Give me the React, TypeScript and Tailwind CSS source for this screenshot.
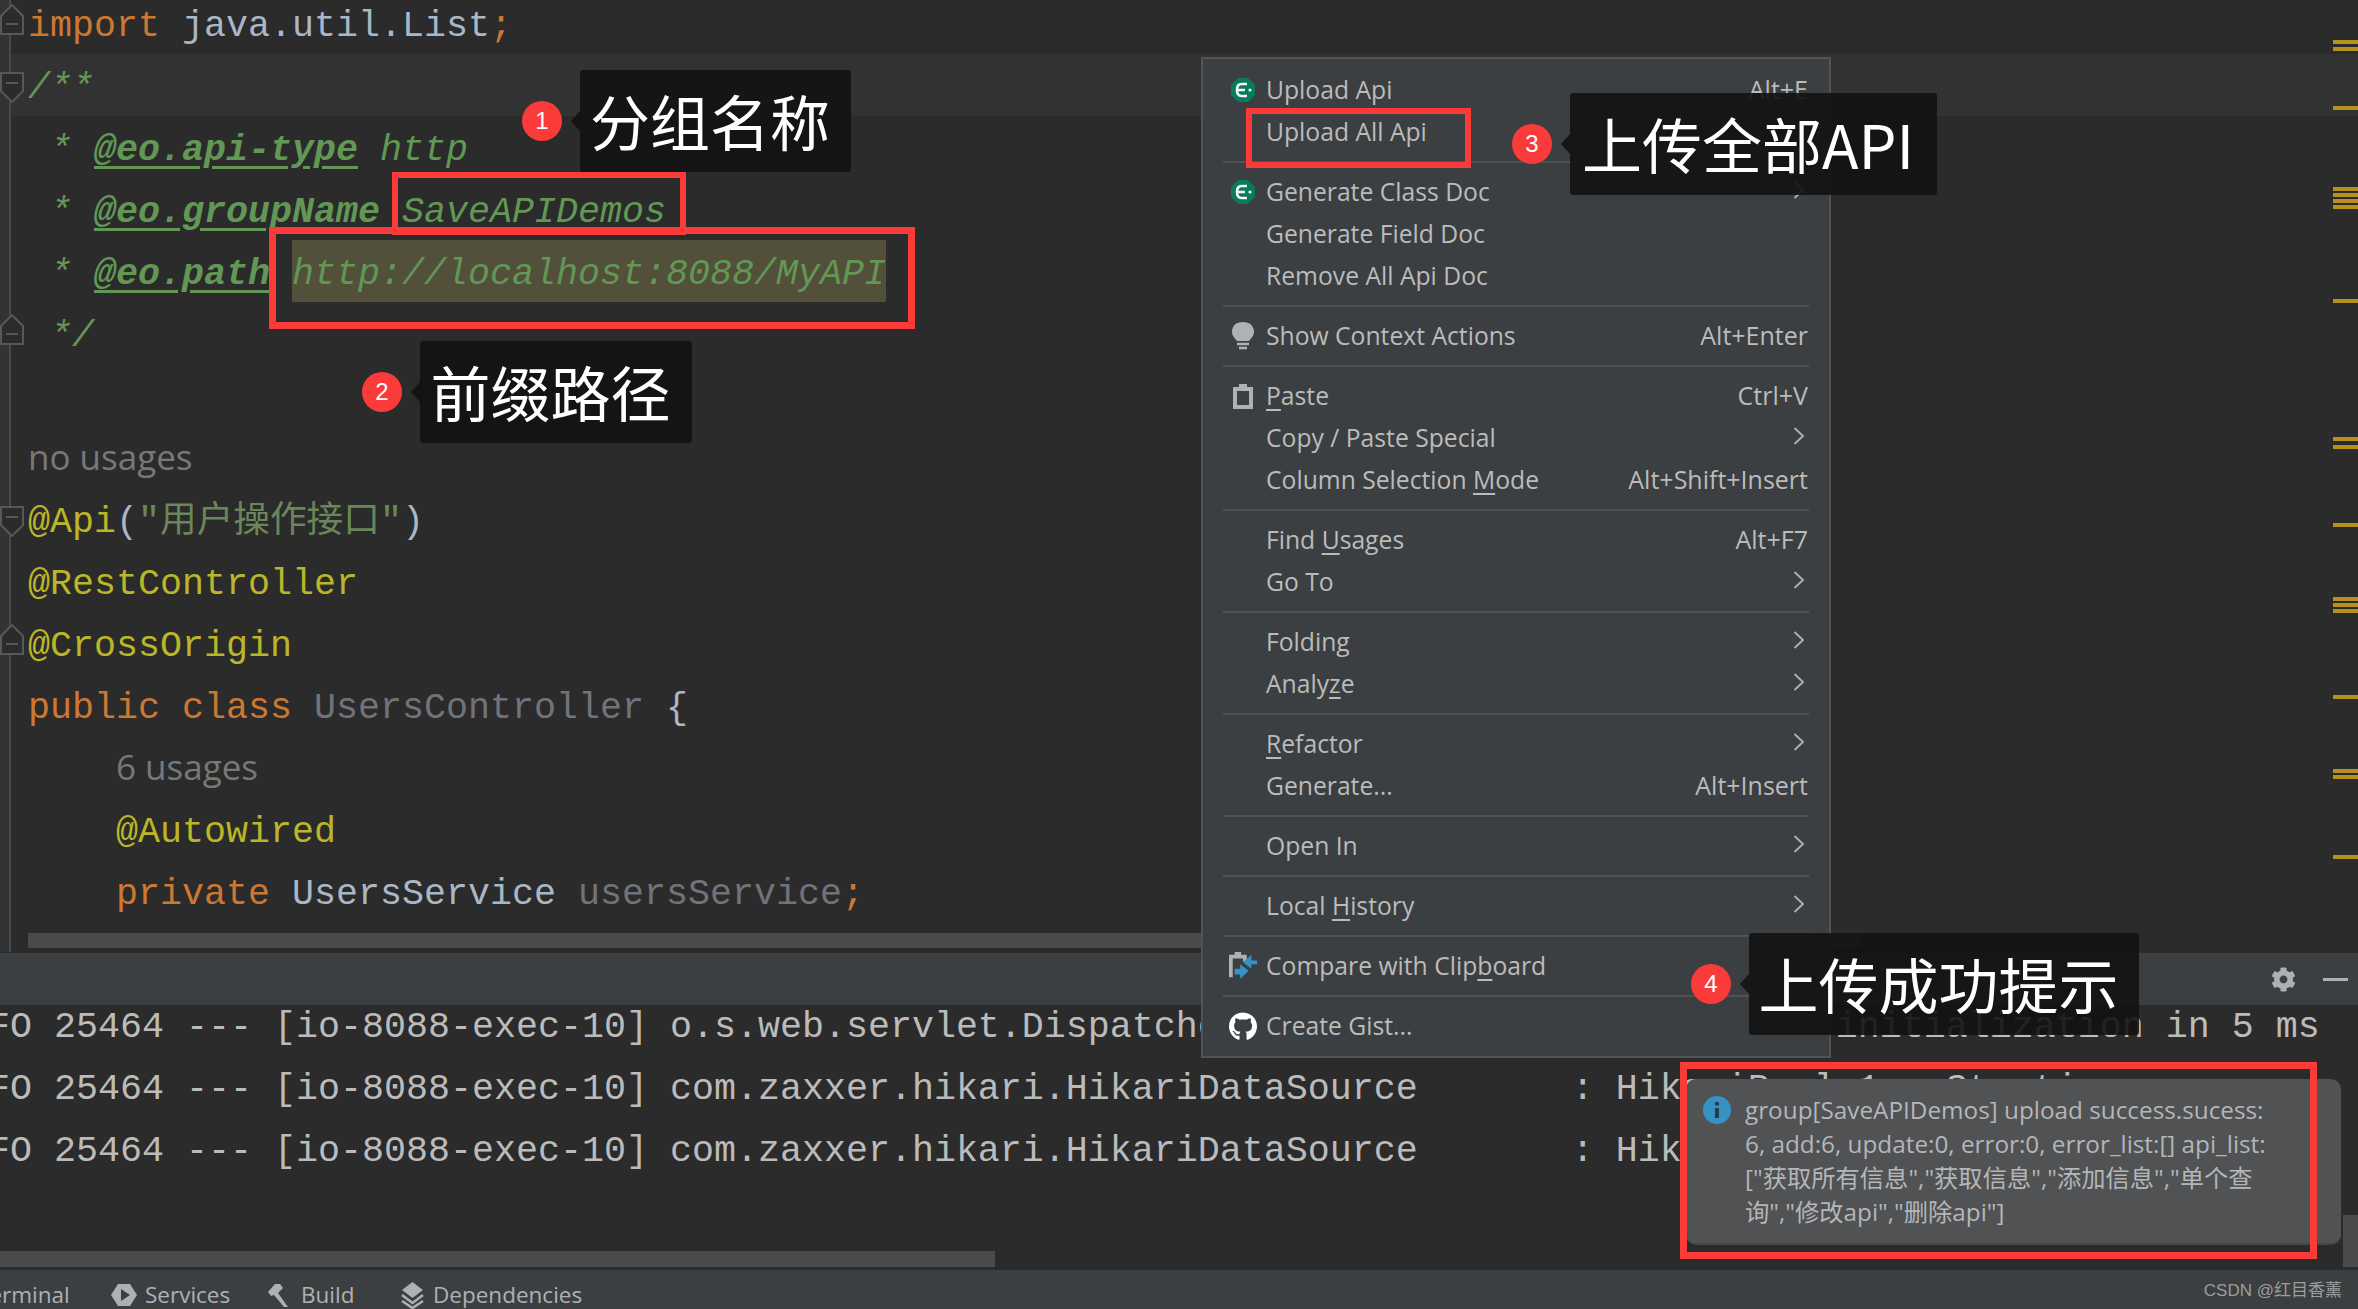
import type { ReactNode } from 'react'
import { FaCog, FaGithub } from 'react-icons/fa'

const MONO = "font-['Liberation_Mono','Noto_Sans_CJK_SC',monospace] text-[36.67px]"
const UI = "font-['Open_Sans','Noto_Sans_CJK_SC',sans-serif]"

const KW = 'text-[#cc7832]'
const ID = 'text-[#a9b7c6]'
const ANN = 'text-[#bbb529]'
const DOC = 'italic text-[#629755]'
const TAG = 'italic font-bold text-[#629755] underline underline-offset-[6px]'
const DIM = 'text-[#72737a]'

const stripes = [40, 47, 106, 187, 193, 199, 205, 299, 437, 445, 523, 597, 603, 609, 695, 769, 775, 855]

function FoldMark({ dir }: { dir: 'up' | 'down' }) {
  const d = dir === 'up' ? 'M1 30V12L12 1L23 12V30Z' : 'M1 1V19L12 30L23 19V1Z'
  return (
    <svg
      width="24"
      height="31"
      viewBox="0 0 24 31"
      className={`absolute -left-[11px] z-10 ${dir === 'up' ? 'top-[12px]' : 'top-[18px]'}`}
    >
      <path d={d} fill="#2b2b2b" stroke="#56585a" strokeWidth="2" />
      <path d={dir === 'up' ? 'M6 20H18' : 'M6 11H18'} stroke="#56585a" strokeWidth="2" />
    </svg>
  )
}

function CodeLine({ fold, active, children }: { fold?: 'up' | 'down'; active?: boolean; children?: ReactNode }) {
  return (
    <div className={`relative h-[62px] flex items-center pl-[17px] pt-[6px] whitespace-pre ${MONO} ${active ? 'bg-[#323232]' : ''}`}>
      {fold && <FoldMark dir={fold} />}
      {children}
    </div>
  )
}

function Hint({ children }: { children: ReactNode }) {
  return <span className={`${UI} -mt-[6px] text-[35px] text-[#787878]`}>{children}</span>
}

function Editor() {
  return (
    <div className="relative h-[952px] shrink-0 flex bg-[#2b2b2b] overflow-hidden">
      <div className="w-[11px] shrink-0 bg-[#313335] border-r-2 border-[#48494b]" />
      <div className="flex-1 min-w-0 flex flex-col">
        <div className="-mt-[8px]">
          <CodeLine fold="up">
            <span className={KW}>import</span>
            <span className={ID}> java.util.List</span>
            <span className={KW}>;</span>
          </CodeLine>
          <CodeLine fold="down" active>
            <span className={DOC}>/**</span>
          </CodeLine>
          <CodeLine>
            <span className={DOC}> * </span>
            <span className={TAG}>@eo.api-type</span>
            <span className={DOC}> http</span>
          </CodeLine>
          <CodeLine>
            <span className={DOC}> * </span>
            <span className={TAG}>@eo.groupName</span>
            <span className={DOC}> SaveAPIDemos</span>
          </CodeLine>
          <CodeLine>
            <span className={DOC}> * </span>
            <span className={TAG}>@eo.path</span>
            <span className={DOC}> </span>
            <span className={`${DOC} bg-[#52503a] self-stretch -mt-[6px] pt-[6px] flex items-center`}>http://localhost:8088/MyAPI</span>
          </CodeLine>
          <CodeLine fold="up">
            <span className={DOC}> */</span>
          </CodeLine>
          <CodeLine />
          <CodeLine>
            <Hint>no usages</Hint>
          </CodeLine>
          <CodeLine fold="down">
            <span className={ANN}>@Api</span>
            <span className={ID}>(</span>
            <span className="text-[#6a8759]">"用户操作接口"</span>
            <span className={ID}>)</span>
          </CodeLine>
          <CodeLine>
            <span className={ANN}>@RestController</span>
          </CodeLine>
          <CodeLine fold="up">
            <span className={ANN}>@CrossOrigin</span>
          </CodeLine>
          <CodeLine>
            <span className={KW}>public class </span>
            <span className={DIM}>UsersController </span>
            <span className={ID}>{'{'}</span>
          </CodeLine>
          <CodeLine>
            <span className="w-[88px]" />
            <Hint>6 usages</Hint>
          </CodeLine>
          <CodeLine>
            <span className={ANN}>    @Autowired</span>
          </CodeLine>
          <CodeLine>
            <span className={KW}>    private </span>
            <span className={ID}>UsersService </span>
            <span className={DIM}>usersService</span>
            <span className={KW}>;</span>
          </CodeLine>
        </div>
        <div className="mt-auto mb-[4px] ml-[17px] w-[1833px] h-[15px] shrink-0 bg-[#4b4b4b]" />
      </div>
      {stripes.map((top) => (
        <div key={top} className="absolute right-0 w-[25px] h-[4px] bg-[#b8901c]" style={{ top }} />
      ))}
    </div>
  )
}

function ToolHeader() {
  return (
    <div className="h-[52px] mt-[1px] shrink-0 bg-[#3c3f41] flex items-center justify-end gap-[27px] pr-[10px]">
      <FaCog className="text-[#aeb0b2]" size={25} />
      <div className="w-[25px] h-[3px] bg-[#aeb0b2]" />
    </div>
  )
}

function Console() {
  const lines = [
    'INFO 25464 --- [io-8088-exec-10] o.s.web.servlet.DispatcherServlet        : Completed initialization in 5 ms',
    'INFO 25464 --- [io-8088-exec-10] com.zaxxer.hikari.HikariDataSource       : HikariPool-1 - Starting...',
    'INFO 25464 --- [io-8088-exec-10] com.zaxxer.hikari.HikariDataSource       : HikariPool-1 - Start completed.',
  ]
  return (
    <div className="relative h-[265px] shrink-0 bg-[#2b2b2b] overflow-hidden">
      <div className={`-mt-[9px] -ml-[56px] whitespace-pre text-[#bbbbbb] ${MONO}`}>
        {lines.map((line) => (
          <div key={line} className="h-[62px] flex items-center">
            {line}
          </div>
        ))}
      </div>
      <div className="absolute left-0 top-[246px] w-[995px] h-[16px] bg-[#4b4b4b]" />
      <div className="absolute right-0 top-[210px] w-[15px] h-[52px] bg-[#4b4b4b]" />
    </div>
  )
}

function StatusBar() {
  return (
    <div className={`relative h-[39px] pt-[10px] shrink-0 bg-[#3c3f41] flex items-center overflow-hidden text-[22.5px] text-[#afb1b3] ${UI}`}>
      <span className="-ml-[23px] w-[134px] shrink-0">Terminal</span>
      <svg width="26" height="24" viewBox="0 0 26 24" className="shrink-0">
        <path d="M7 1H19L26 12L19 23H7L0 12Z" fill="#aeb0b2" />
        <path d="M10 6L19 12L10 18Z" fill="#3c3f41" />
      </svg>
      <span className="ml-[8px] w-[122px] shrink-0">Services</span>
      <svg width="26" height="26" viewBox="0 0 26 26" className="shrink-0">
        <path d="M1 10L8 2H13L16 6L11 11L21 25H17L7 13L4 14Z" fill="#aeb0b2" />
      </svg>
      <span className="ml-[8px] w-[99px] shrink-0">Build</span>
      <svg width="25" height="28" viewBox="0 0 25 28" className="shrink-0">
        <path d="M12.5 1L23 9L12.5 17L2 9Z" fill="#aeb0b2" />
        <path d="M2 14L12.5 22L23 14M2 20L12.5 27L23 20" fill="none" stroke="#aeb0b2" strokeWidth="2.5" />
      </svg>
      <span className="ml-[8px]">Dependencies</span>
      <span className="ml-auto mr-[16px] -mt-[8px] text-[17px] text-[#9b9d9f] font-['Liberation_Sans','Noto_Sans_CJK_SC',sans-serif]">
        CSDN @红目香薰
      </span>
    </div>
  )
}

function EoIcon() {
  return (
    <svg width="26" height="26" viewBox="0 0 26 26">
      <path d="M8 1H18L25 8V18L18 25H8L1 18V8Z" fill="#0b7a5c" />
      <path d="M17 7H11.5Q7 7 7 13Q7 19 11.5 19H17M7.5 13H15" fill="none" stroke="#f2f7f5" strokeWidth="2.6" />
      <circle cx="20" cy="13" r="1.6" fill="#f2f7f5" />
    </svg>
  )
}

function BulbIcon() {
  return (
    <svg width="22" height="28" viewBox="0 0 22 28">
      <path d="M11 0C4 0 0 4 0 10C0 14 3 16 5 19H17C19 16 22 14 22 10C22 4 18 0 11 0Z" fill="#afb1b3" />
      <path d="M5 22H17M7 26H15" stroke="#afb1b3" strokeWidth="2.4" />
    </svg>
  )
}

function ClipIcon() {
  return (
    <svg width="20" height="25" viewBox="0 0 20 25">
      <path d="M0 3H6V0H14V3H20V25H0Z" fill="#afb1b3" />
      <path d="M4 7H16V21H4Z" fill="#3c3f41" />
    </svg>
  )
}

function CompareIcon() {
  return (
    <svg width="30" height="30" viewBox="0 0 30 30">
      <path d="M0 3H6V0H13V3H19V10H15V7H4V27H0Z" fill="#afb1b3" />
      <path d="M30 9H24V3L15 11L24 18V13H30Z" fill="#3592c4" />
      <path d="M6 18H12V13L21 20L12 29V24H6Z" fill="#3592c4" />
    </svg>
  )
}

function MenuRow({
  icon,
  label,
  shortcut,
  sub,
}: {
  icon?: ReactNode
  label: ReactNode
  shortcut?: string
  sub?: boolean
}) {
  return (
    <div className="relative h-[42px] flex items-center pl-[63px] pr-[21px] whitespace-nowrap">
      {icon && <span className="absolute left-[26px] w-[28px] flex justify-center">{icon}</span>}
      <span className="text-[24.7px]">{label}</span>
      {shortcut && <span className="ml-auto">{shortcut}</span>}
      {sub && (
        <svg width="12" height="18" viewBox="0 0 12 18" className="ml-auto mr-[3px] -mt-[4px]">
          <path d="M1.5 1L10 9L1.5 17" fill="none" stroke="#afb1b3" strokeWidth="1.8" />
        </svg>
      )}
    </div>
  )
}

function Sep() {
  return (
    <div className="h-[18px] flex items-center px-[20px]">
      <div className="w-full h-[2px] bg-[#4f5153]" />
    </div>
  )
}

function U({ children }: { children: ReactNode }) {
  return <span className="underline underline-offset-[4px]">{children}</span>
}

function ContextMenu() {
  return (
    <div className={`absolute left-[1201px] top-[57px] w-[630px] h-[1001px] bg-[#3c3f41] border-2 border-[#515355] pt-[10px] text-[25px] text-[#bbbbbb] ${UI}`}>
      <MenuRow icon={<EoIcon />} label="Upload Api" shortcut="Alt+E" />
      <MenuRow label="Upload All Api" />
      <Sep />
      <MenuRow icon={<EoIcon />} label="Generate Class Doc" sub />
      <MenuRow label="Generate Field Doc" />
      <MenuRow label="Remove All Api Doc" />
      <Sep />
      <MenuRow icon={<BulbIcon />} label="Show Context Actions" shortcut="Alt+Enter" />
      <Sep />
      <MenuRow icon={<ClipIcon />} label={<><U>P</U>aste</>} shortcut="Ctrl+V" />
      <MenuRow label="Copy / Paste Special" sub />
      <MenuRow label={<>Column Selection <U>M</U>ode</>} shortcut="Alt+Shift+Insert" />
      <Sep />
      <MenuRow label={<>Find <U>U</U>sages</>} shortcut="Alt+F7" />
      <MenuRow label="Go To" sub />
      <Sep />
      <MenuRow label="Folding" sub />
      <MenuRow label={<>Analy<U>z</U>e</>} sub />
      <Sep />
      <MenuRow label={<><U>R</U>efactor</>} sub />
      <MenuRow label="Generate..." shortcut="Alt+Insert" />
      <Sep />
      <MenuRow label="Open In" sub />
      <Sep />
      <MenuRow label={<>Local <U>H</U>istory</>} sub />
      <Sep />
      <MenuRow icon={<CompareIcon />} label={<>Compare with Clip<U>b</U>oard</>} />
      <Sep />
      <MenuRow icon={<FaGithub size={29} className="text-white" />} label="Create Gist..." />
    </div>
  )
}

function Notification() {
  return (
    <div className={`absolute left-[1686px] top-[1079px] w-[655px] h-[166px] rounded-[10px] bg-[#505254] border-b-2 border-[#45474a] flex pt-[14px] pl-[17px] text-[24.3px] leading-[34px] text-[#b4b6b8] ${UI}`}>
      <svg width="28" height="28" viewBox="0 0 28 28" className="shrink-0 mt-[3px]">
        <circle cx="14" cy="14" r="14" fill="#3592c4" />
        <rect x="12" y="6" width="4" height="3.5" fill="#2b3a44" />
        <rect x="12" y="12" width="4" height="10" fill="#2b3a44" />
      </svg>
      <div className="ml-[14px] w-[560px] whitespace-nowrap">
        group[SaveAPIDemos] upload success.sucess:
        <br />
        6, add:6, update:0, error:0, error_list:[] api_list:
        <br />
        ["获取所有信息","获取信息","添加信息","单个查
        <br />
        询","修改api","删除api"]
      </div>
    </div>
  )
}

function Callout({
  num,
  text,
  circleClass,
  boxClass,
}: {
  num: number
  text: string
  circleClass: string
  boxClass: string
}) {
  return (
    <>
      <div className={`absolute w-[40px] h-[40px] rounded-full bg-[#fb3a3a] text-white text-[24px] flex items-center justify-center font-['Liberation_Sans',sans-serif] ${circleClass}`}>
        {num}
      </div>
      <div className={`absolute h-[102px] pr-[11px] pb-[3px] rounded-[3px] bg-[#121212]/90 flex items-center justify-center whitespace-nowrap text-[60px] text-white font-['Noto_Sans_CJK_SC',sans-serif] ${boxClass}`}>
        <span className="absolute -left-[9px] top-[41px] border-y-[10px] border-r-[9px] border-y-transparent border-r-[#121212]/90" />
        {text}
      </div>
    </>
  )
}

export default function App() {
  return (
    <div className="relative w-[2358px] h-[1309px] overflow-hidden flex flex-col bg-[#2b2b2b]">
      <Editor />
      <ToolHeader />
      <Console />
      <StatusBar />

      <ContextMenu />
      <Notification />

      <div className="absolute left-[392px] top-[172px] w-[294px] h-[63px] border-[6px] border-[#fb3a3a]" />
      <div className="absolute left-[269px] top-[227px] w-[646px] h-[102px] border-[7px] border-[#fb3a3a]" />
      <div className="absolute left-[1246px] top-[108px] w-[225px] h-[60px] border-[6px] border-[#fb3a3a]" />
      <div className="absolute left-[1680px] top-[1062px] w-[637px] h-[197px] border-[7px] border-[#fb3a3a]" />

      <Callout num={1} text="分组名称" circleClass="left-[522px] top-[101px]" boxClass="left-[580px] top-[70px] w-[271px]" />
      <Callout num={2} text="前缀路径" circleClass="left-[362px] top-[372px]" boxClass="left-[420px] top-[341px] w-[272px]" />
      <Callout num={3} text="上传全部API" circleClass="left-[1512px] top-[124px]" boxClass="left-[1570px] top-[93px] w-[367px]" />
      <Callout num={4} text="上传成功提示" circleClass="left-[1691px] top-[964px]" boxClass="left-[1749px] top-[933px] w-[390px]" />
    </div>
  )
}
